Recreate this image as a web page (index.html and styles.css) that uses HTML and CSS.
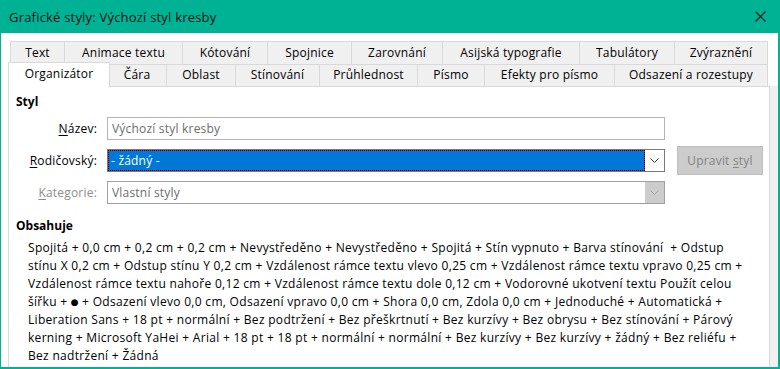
FILE: index.html
```html
<!DOCTYPE html>
<html>
	<head>
		<meta charset="UTF-8">
		<title>Grafické styly: Výchozí styl kresby</title>
		<link rel="stylesheet" href="styles.css">
	</head>
	<body>
		<div class="dialog">
			<div class="titlebar">
				<span class="title">Grafické styly: Výchozí styl kresby</span>
				<svg class="close" width="11" height="11" viewBox="0 0 11 11"><path d="M0.5 0.5L10.5 10.5M10.5 0.5L0.5 10.5" stroke="#1b1b1b" stroke-width="1.1" fill="none"/></svg>
			</div>
			<div class="dialog-body">
				<div class="tabs">
					<ul class="tab-row tab-row-back">
						<li>Text</li>
						<li>Animace textu</li>
						<li>Kótování</li>
						<li>Spojnice</li>
						<li>Zarovnání</li>
						<li>Asijská typografie</li>
						<li>Tabulátory</li>
						<li>Zvýraznění</li>
					</ul>
					<ul class="tab-row tab-row-front">
						<li class="active">Organizátor</li>
						<li>Čára</li>
						<li>Oblast</li>
						<li>Stínování</li>
						<li>Průhlednost</li>
						<li>Písmo</li>
						<li>Efekty pro písmo</li>
						<li>Odsazení a rozestupy</li>
					</ul>
				</div>
				<div class="page">
					<div class="panel">
						<h3 class="section-title">Styl</h3>
						<div class="style-form">
							<label class="field-label row-name"><u>N</u>ázev:</label>
							<div class="textbox row-name">Výchozí styl kresby</div>

							<label class="field-label row-parent"><u>R</u>odičovský:</label>
							<div class="combo row-parent">
								<div class="combo-value selected">- žádný -</div>
								<div class="combo-btn">
									<svg width="9" height="5" viewBox="0 0 9 5"><path d="M0.5 0.5L4.5 4.5L8.5 0.5" stroke="#333" fill="none"/></svg>
								</div>
							</div>
							<button class="btn-edit row-parent" disabled>Upravit <u>s</u>tyl</button>

							<label class="field-label disabled row-category"><u>K</u>ategorie:</label>
							<div class="combo combo-disabled row-category">
								<div class="combo-value">Vlastní styly</div>
								<div class="combo-btn">
									<svg width="9" height="5" viewBox="0 0 9 5"><path d="M0.5 0.5L4.5 4.5L8.5 0.5" stroke="#a8a8a8" fill="none"/></svg>
								</div>
							</div>
						</div>

						<h3 class="section-title contains-title">Obsahuje</h3>
						<p class="contents">
							Spojitá + 0,0 cm + 0,2 cm + 0,2 cm + Nevystředěno + Nevystředěno + Spojitá + Stín vypnuto + Barva stínování&nbsp; + Odstup<br>
							stínu X 0,2 cm + Odstup stínu Y 0,2 cm + Vzdálenost rámce textu vlevo 0,25 cm + Vzdálenost rámce textu vpravo 0,25 cm +<br>
							Vzdálenost rámce textu nahoře 0,12 cm + Vzdálenost rámce textu dole 0,12 cm + Vodorovné ukotvení textu Použít celou<br>
							šířku + <span class="bullet">●</span> + Odsazení vlevo 0,0 cm, Odsazení vpravo 0,0 cm + Shora 0,0 cm, Zdola 0,0 cm + Jednoduché + Automatická +<br>
							Liberation Sans + 18 pt + normální + Bez podtržení + Bez přeškrtnutí + Bez kurzívy + Bez obrysu + Bez stínování + Párový<br>
							kerning + Microsoft YaHei + Arial + 18 pt + 18 pt + normální + normální + Bez kurzívy + Bez kurzívy + žádný + Bez reliéfu +<br>
							Bez nadtržení + Žádná
						</p>
					</div>
					<div class="gutter"></div>
				</div>
			</div>
		</div>
	</body>
</html>
```

FILE: styles.css
```css
* { box-sizing: border-box; }

html, body {
	margin: 0;
	padding: 0;
	background: #fff;
}

body {
	font-family: "Open Sans", "Noto Sans", sans-serif;
	font-size: 12px;
	color: #000;
	letter-spacing: 0.2px;
}

.dialog {
	width: 780px;
	height: 369px;
	border: solid #00b294;
	border-width: 0 2px 2px 1px;
	display: flex;
	flex-direction: column;
	overflow: hidden;
}

.titlebar {
	height: 33px;
	flex: 0 0 33px;
	background: #00b294;
	display: flex;
	align-items: center;
	justify-content: space-between;
	padding: 0 14px 0 8px;
	margin-right: -2px;
}
.title {
	font-size: 13px;
	color: #111;
}
.close { display: block; }

.dialog-body {
	flex: 1;
	display: flex;
	flex-direction: column;
	background: #fff;
	min-height: 0;
}

/* tabs */
.tabs {
	padding: 8px 0 0 9px;
}
.tab-row {
	list-style: none;
	margin: 0;
	padding: 0;
	display: grid;
}
.tab-row li {
	background: #f0f0f0;
	border: 1px solid #d9d9d9;
	border-left: none;
	text-align: center;
	white-space: nowrap;
	line-height: 20px;
}
.tab-row li:first-child {
	border-left: 1px solid #d9d9d9;
}
.tab-row-back {
	grid-template-columns: 55px 118px 85px 84px 91px 137px 95px 93px;
	height: 23px;
}
.tab-row-back li {
	border-bottom: none;
	line-height: 22px;
}
.tab-row-front {
	grid-template-columns: 98px 59px 69px 84px 98px 67px 130px 153px;
	height: 22px;
}
.tab-row-front li {
	border-bottom: none;
}
.tab-row-front li.active {
	background: #fff;
	position: relative;
	z-index: 1;
	margin: -2px -2px -1px -2px;
	border-left: 1px solid #d9d9d9;
	line-height: 22px;
}

/* page */
.page {
	flex: 1;
	display: flex;
	padding-left: 7px;
	min-height: 0;
}
.panel {
	flex: 0 0 762px;
	border: 1px solid #d9d9d9;
	border-bottom: none;
	background: #fff;
	padding: 7px 7px 0;
}
.gutter {
	flex: 1;
	background: #f0f0f0;
}

.section-title {
	margin: 0;
	font-size: 12px;
	font-weight: bold;
	line-height: 16px;
	letter-spacing: 0;
}

.style-form {
	margin-top: 7px;
	display: grid;
	grid-template-columns: 81px 558px 86px;
	grid-template-rows: 23px 23px 23px;
	column-gap: 10px;
	row-gap: 9px;
	align-items: center;
}
.row-name { grid-row: 1; }
.row-parent { grid-row: 2; }
.row-category { grid-row: 3; }
.field-label {
	grid-column: 1;
	text-align: right;
}
.field-label.disabled {
	color: #8d8d8d;
}
.field-label u {
	text-underline-offset: 2px;
}

.textbox {
	grid-column: 2;
	height: 23px;
	border: 1px solid #b4b4b4;
	padding: 0 4px;
	line-height: 21px;
	color: #6d6d6d;
}

.combo {
	grid-column: 2;
	height: 23px;
	border: 1px solid #7a7a7a;
	display: flex;
	background: #fff;
}
.combo-value {
	flex: 1;
	padding: 0 4px;
	line-height: 21px;
	color: #6d6d6d;
}
.combo-value.selected {
	background: #0078d7;
	color: #fff;
	outline: 1px dotted #000;
	outline-offset: -1px;
	padding-left: 3px;
}
.combo-btn {
	flex: 0 0 19px;
	display: flex;
	align-items: center;
	justify-content: center;
}
.combo-btn svg { display: block; }
.combo-disabled {
	border-color: #a0a0a0;
}
.combo-disabled .combo-btn {
	background: #cccccc;
}

.btn-edit {
	grid-column: 3;
	margin-left: 2px;
	height: 29px;
	width: 86px;
	align-self: center;
	background: #cccccc;
	border: 1px solid #bfbfbf;
	color: #838383;
	font-family: inherit;
	font-size: 12px;
	letter-spacing: 0.2px;
	padding: 0;
}
.btn-edit u {
	text-underline-offset: 2px;
}

.contains-title {
	margin-top: 14px;
}

.contents {
	margin: 5px 0 0;
	padding-left: 12px;
	line-height: 18px;
	white-space: nowrap;
	letter-spacing: 0.3px;
}
.bullet {
	font-family: "DejaVu Sans", sans-serif;
	font-size: 9px;
	line-height: 10px;
	vertical-align: 1px;
	letter-spacing: 0;
}
```
